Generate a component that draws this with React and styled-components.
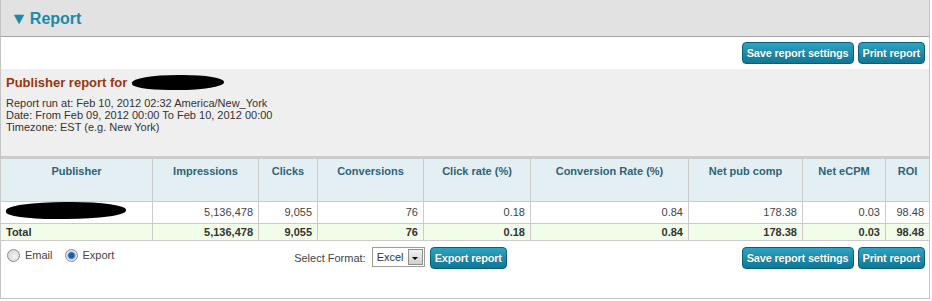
import React from 'react';
import styled, { createGlobalStyle } from 'styled-components';

const GlobalStyle = createGlobalStyle`
  html, body { margin: 0; padding: 0; background: #fff; }
  body { font-family: "Liberation Sans", Arial, sans-serif; font-size: 11px; color: #333; }
`;

const Panel = styled.div`
  width: 928px;
  height: 298px;
  border: 1px solid #c4c4c4;
  border-top: none;
  background: #fff;
`;

const HeaderBar = styled.div`
  height: 37px;
  background: #e2e2e2;
  border-bottom: 1px solid #a3a3a3;
  display: flex;
  align-items: center;
  padding-left: 10px;
  padding-top: 1px;
  box-sizing: border-box;
  font-size: 16px;
  font-weight: bold;
  color: #1a8aa6;
`;

const Arrow = styled.span`
  font-size: 16px;
  margin-right: 3px;
  transform: scaleX(1.1);
`;

const Toolbar = styled.div`
  height: 32px;
  display: flex;
  justify-content: flex-end;
  align-items: flex-start;
  gap: 4px;
  padding: 5px 4px 0 0;
  box-sizing: border-box;
`;

const Button = styled.button`
  height: 22px;
  padding: 0 4px;
  border: 1px solid #0b5e77;
  border-radius: 4px;
  background: linear-gradient(#2ea3c2, #0e7896);
  color: #fff;
  font-family: "Liberation Sans", Arial, sans-serif;
  font-size: 11px;
  font-weight: bold;
  letter-spacing: -0.2px;
  text-shadow: 0 0 1px rgba(0, 40, 60, 0.5);
  cursor: pointer;
`;

const Info = styled.div`
  height: 90px;
  background: #efefef;
  padding: 4px 5px 0;
  box-sizing: border-box;
  line-height: 12px;
  border-bottom: 3px solid #cbcbcb;
`;

const Title = styled.div`
  font-size: 13px;
  font-weight: bold;
  color: #99360f;
  height: 19px;
  margin-bottom: 5px;
  display: flex;
  align-items: center;
`;

const Blot = styled.span`
  display: inline-block;
  background: #000;
  width: ${p => p.w}px;
  height: ${p => p.h}px;
  border-radius: 50% 45% 50% 40%;
  margin-left: ${p => p.ml || 0}px;
`;

const Table = styled.table`
  border-collapse: collapse;
  width: 929px;
  margin-left: -1px;
  table-layout: fixed;
`;

const Th = styled.th`
  background: #e3eff3;
  color: #2c6478;
  font-size: 11px;
  font-weight: bold;
  height: 42px;
  vertical-align: top;
  padding: 6px 4px 0;
  border: 1px solid #cbcbcb;
  border-top: none;
  box-sizing: border-box;
`;

const Td = styled.td`
  text-align: ${p => (p.left ? 'left' : 'right')};
  padding: 0 5px;
  height: ${p => (p.total ? 16 : 21)}px;
  border: 1px solid #cbcbcb;
  background: ${p => (p.total ? '#f1fde8' : '#fff')};
  font-weight: ${p => (p.total ? 'bold' : 'normal')};
  color: ${p => (p.total ? '#333' : '#444')};
  line-height: 14px;
`;

const Footer = styled.div`
  display: flex;
  align-items: flex-start;
  padding: 6px 4px 0 6px;
`;

const RadioGroup = styled.div`
  display: flex;
  gap: 12px;
  padding-top: 2px;
  flex: 1;
`;

const RadioLabel = styled.label`
  display: flex;
  align-items: center;
  gap: 5px;
  color: #444;
`;

const RadioDot = styled.span`
  width: 11px;
  height: 11px;
  border-radius: 50%;
  border: 1px solid #8b8b8b;
  background: ${p =>
    p.checked
      ? 'radial-gradient(circle, #1a5ea8 0 2.5px, #6ea6d8 3.5px, #e8e8e8 4.5px, #d4d4d4 100%)'
      : 'radial-gradient(circle at 60% 60%, #f4f4f4, #cfcfcf)'};
`;

const ExportGroup = styled.div`
  display: flex;
  align-items: flex-start;
  gap: 5px;
  margin-right: 235px;
`;

const FormatLabel = styled.span`
  color: #444;
  padding-top: 5px;
  margin-right: 1px;
`;

const FakeSelect = styled.div`
  height: 20px;
  width: 53px;
  border: 1px solid #9d9d9d;
  display: flex;
  align-items: center;
  justify-content: space-between;
  padding-left: 4px;
  box-sizing: border-box;
  color: #333;
  background: #fff;
`;

const SelectArrow = styled.span`
  width: 15px;
  height: 16px;
  margin-right: 1px;
  border: 1px solid #8f8f8f;
  box-sizing: border-box;
  background: linear-gradient(#f2f2f2, #cfcfcf);
  display: flex;
  align-items: center;
  justify-content: center;
  &::after {
    content: '';
    margin-top: 3px;
    border-left: 3px solid transparent;
    border-right: 3px solid transparent;
    border-top: 3px solid #000;
  }
`;

const RightButtons = styled.div`
  display: flex;
  gap: 4px;
`;

const columns = [
  { label: 'Publisher', width: 152 },
  { label: 'Impressions', width: 106 },
  { label: 'Clicks', width: 59 },
  { label: 'Conversions', width: 106 },
  { label: 'Click rate (%)', width: 107 },
  { label: 'Conversion Rate (%)', width: 158 },
  { label: 'Net pub comp', width: 114 },
  { label: 'Net eCPM', width: 83 },
  { label: 'ROI', width: 44 },
];

const values = ['5,136,478', '9,055', '76', '0.18', '0.84', '178.38', '0.03', '98.48'];

export default function App() {
  return (
    <>
      <GlobalStyle />
      <Panel>
        <HeaderBar>
          <Arrow>▼</Arrow>Report
        </HeaderBar>
        <Toolbar>
          <Button>Save report settings</Button>
          <Button>Print report</Button>
        </Toolbar>
        <Info>
          <Title>
            Publisher report for <Blot w={92} h={15} ml={5} />
          </Title>
          <div>Report run at: Feb 10, 2012 02:32 America/New_York</div>
          <div>Date: From Feb 09, 2012 00:00 To Feb 10, 2012 00:00</div>
          <div>Timezone: EST (e.g. New York)</div>
        </Info>
        <Table>
          <colgroup>
            {columns.map(c => (
              <col key={c.label} style={{ width: c.width }} />
            ))}
          </colgroup>
          <thead>
            <tr>
              {columns.map(c => (
                <Th key={c.label}>{c.label}</Th>
              ))}
            </tr>
          </thead>
          <tbody>
            <tr>
              <Td left>
                <Blot w={120} h={17} />
              </Td>
              {values.map((v, i) => (
                <Td key={i}>{v}</Td>
              ))}
            </tr>
            <tr>
              <Td left total>Total</Td>
              {values.map((v, i) => (
                <Td key={i} total>{v}</Td>
              ))}
            </tr>
          </tbody>
        </Table>
        <Footer>
          <RadioGroup>
            <RadioLabel><RadioDot />Email</RadioLabel>
            <RadioLabel><RadioDot checked />Export</RadioLabel>
          </RadioGroup>
          <ExportGroup>
            <FormatLabel>Select Format:</FormatLabel>
            <FakeSelect>Excel<SelectArrow /></FakeSelect>
            <Button>Export report</Button>
          </ExportGroup>
          <RightButtons>
            <Button>Save report settings</Button>
            <Button>Print report</Button>
          </RightButtons>
        </Footer>
      </Panel>
    </>
  );
}
